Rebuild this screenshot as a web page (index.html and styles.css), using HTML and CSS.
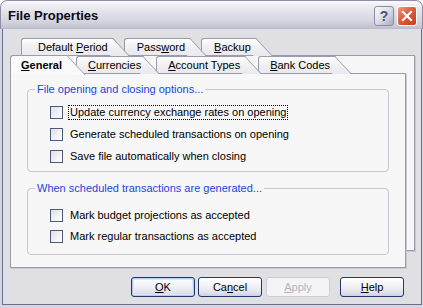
FILE: index.html
```html
<!DOCTYPE html>
<html lang="en">
<head>
    <meta charset="UTF-8">
    <meta name="viewport" content="width=device-width, initial-scale=1.0">
    <title>File Properties</title>
    <link rel="stylesheet" href="styles.css">
</head>
<body>
    <div class="window">
        <div class="titlebar">
            <span class="title">File Properties</span>
            <div class="caption-btns">
                <span class="cbtn help">?</span>
                <span class="cbtn close">
                    <svg width="12" height="12" viewBox="0 0 12 12">
                        <path d="M2 2 L10 10 M10 2 L2 10" stroke="#fff" stroke-width="2.2" stroke-linecap="square"/>
                    </svg>
                </span>
            </div>
        </div>

        <div class="client">
            <div class="tabstack">
                <div class="sheet back">
                    <div class="tabs">
                        <span class="tab first"><span>Default <u>P</u>eriod</span></span>
                        <span class="tab"><span>Pass<u>w</u>ord</span></span>
                        <span class="tab"><span><u>B</u>ackup</span></span>
                    </div>
                    <div class="page"></div>
                </div>

                <div class="sheet front">
                    <div class="tabs">
                        <span class="tab active"><span><u>G</u>eneral</span></span>
                        <span class="tab narrow"><span><u>C</u>urrencies</span></span>
                        <span class="tab"><span><u>A</u>ccount Types</span></span>
                        <span class="tab"><span><u>B</u>ank Codes</span></span>
                    </div>
                    <div class="page">
                        <fieldset class="group first-group">
                            <legend>File opening and closing options...</legend>
                            <div class="checks">
                                <label class="check"><span class="box"></span><span class="text focus">Update currency exchange rates on opening</span></label>
                                <label class="check"><span class="box"></span><span class="text">Generate scheduled transactions on opening</span></label>
                                <label class="check"><span class="box"></span><span class="text">Save file automatically when closing</span></label>
                            </div>
                        </fieldset>

                        <fieldset class="group second-group">
                            <legend>When scheduled transactions are generated...</legend>
                            <div class="checks">
                                <label class="check"><span class="box"></span><span class="text">Mark budget projections as accepted</span></label>
                                <label class="check"><span class="box"></span><span class="text">Mark regular transactions as accepted</span></label>
                            </div>
                        </fieldset>
                    </div>
                </div>
            </div>

            <div class="buttons">
                <button class="btn default"><u>O</u>K</button>
                <button class="btn">Ca<u>n</u>cel</button>
                <button class="btn" disabled><u>A</u>pply</button>
                <button class="btn help-btn"><u>H</u>elp</button>
            </div>
        </div>
    </div>
</body>
</html>
```

FILE: styles.css
```css
* {
    margin: 0;
    padding: 0;
    box-sizing: border-box;
}

body {
    font-family: "Liberation Sans", Arial, sans-serif;
    font-size: 11px;
    color: #000;
    background: #fff;
}

u {
    text-decoration: underline;
    text-underline-offset: 1px;
}

/* window frame */
.window {
    width: 423px;
    height: 308px;
    display: flex;
    flex-direction: column;
    background: #d6d6e2;
    border-radius: 7px 7px 0 0;
    padding: 0 1px 3px 2px;
    overflow: hidden;
}

.titlebar {
    height: 29px;
    margin: 0 -1px 0 -2px;
    display: flex;
    align-items: center;
    justify-content: space-between;
    padding: 0 5px 0 7px;
    border-radius: 7px 7px 0 0;
    border: 1px solid #8e8ea8;
    border-bottom: none;
    background: linear-gradient(#fcfcfd 0%, #eeeef3 15%, #e2e2ea 40%, #d8d8e2 65%, #c9c9d6 90%, #b9b9ca 100%);
}

.title {
    font-size: 13px;
    font-weight: bold;
    color: #0a0a14;
    margin-top: 1px;
}

.caption-btns {
    display: flex;
    gap: 3px;
    margin-top: 2px;
}

.cbtn {
    width: 20px;
    height: 20px;
    border-radius: 3px;
    display: flex;
    align-items: center;
    justify-content: center;
}

.cbtn.help {
    border: 1px solid #8a8aa4;
    background: linear-gradient(135deg, #fbfbfd, #d8d8e4 55%, #a9a9c0);
    color: #4e4e70;
    font-weight: bold;
    font-size: 14px;
}

.cbtn.close {
    border: 1px solid #fff;
    background: linear-gradient(135deg, #ef9a80, #de5d3f 45%, #c63d1f);
}

.client {
    flex: 1;
    background: #e0dfe3;
    border: 1px solid #6d6d8d;
    border-top: none;
    display: flex;
    flex-direction: column;
}

/* stacked property sheets */
.tabstack {
    display: grid;
    margin: 9px 6px 0 7px;
    height: 230px;
}

.sheet {
    grid-area: 1 / 1;
    display: flex;
    flex-direction: column;
}

.sheet.back {
    margin-left: 10px;
    margin-bottom: 17px;
}

.sheet.front {
    margin-top: 17px;
    margin-right: 9px;
}

.tabs {
    display: flex;
    align-items: flex-end;
    height: 17px;
    position: relative;
    z-index: 2;
}

.sheet.back .tabs {
    padding-left: 1px;
}

.sheet.front .tabs {
    height: 18px;
}

.tab {
    position: relative;
    z-index: 1;
    height: 17px;
    display: flex;
    align-items: center;
    padding: 0 4px 0 11px;
    margin-right: 14px;
    border: 1px solid #9b9bad;
    border-right: none;
    border-bottom: none;
    border-top-left-radius: 3px;
    background: linear-gradient(#ffffff, #f2f2f4 40%, #e9e9ee);
    white-space: nowrap;
}

.tab.narrow {
    padding-right: 1px;
}

/* slanted right edge of a tab */
.tab::after {
    content: "";
    position: absolute;
    z-index: -1;
    top: -1px;
    left: calc(100% - 18px);
    width: 18px;
    height: 17px;
    border-top: 1px solid #9b9bad;
    border-right: 1px solid #9b9bad;
    background: linear-gradient(#ffffff, #f2f2f4 40%, #e9e9ee);
    transform: skewX(43deg);
    transform-origin: top left;
}

.tabs .tab:nth-child(1) { z-index: 4; }
.tabs .tab:nth-child(2) { z-index: 3; }
.tabs .tab:nth-child(3) { z-index: 2; }

.sheet.back .tab {
    padding: 0 4px 0 12px;
    margin-right: 12px;
}

.sheet.back .tab.first {
    padding-left: 16px;
}

.tab.active {
    height: 19px;
    margin-bottom: -1px;
    margin-right: 10px;
    font-weight: bold;
    padding-left: 10px;
    background: #fafafb;
}

.tab.active::after {
    height: 19px;
    background: #fafafb;
}

.page {
    flex: 1;
    background: #f7f7f8;
    border: 1px solid #9b9bad;
    box-shadow: 1px 1px 0 #c9c9d6;
}

.sheet.front .page {
    padding: 9px 16px 0 16px;
    display: flex;
    flex-direction: column;
    gap: 10px;
}

/* group boxes */
.group {
    border: 1px solid #c8c8d2;
    border-radius: 4px;
    padding: 0 7px 8px 7px;
}

.group legend {
    color: #1a46d8;
    padding: 0 2px;
    line-height: 12px;
}

.checks {
    display: flex;
    flex-direction: column;
    gap: 9px;
    padding: 11px 0 0 15px;
}

.second-group .checks {
    gap: 8px;
    padding-top: 15px;
    padding-bottom: 3px;
}

.check {
    display: flex;
    align-items: center;
    height: 13px;
    gap: 5px;
}

.box {
    width: 13px;
    height: 13px;
    border: 1px solid #4a5a78;
    background: linear-gradient(135deg, #dedee4, #f4f4f6 60%, #fff);
}

.text {
    line-height: 13px;
    padding: 0 1px;
    border: 1px dotted transparent;
}

.text.focus {
    border-color: #000;
}

/* dialog buttons */
.buttons {
    display: flex;
    justify-content: flex-end;
    gap: 3px;
    margin: 9px 17px 0 0;
}

.btn {
    width: 64px;
    height: 20px;
    font-family: inherit;
    font-size: 11px;
    color: #000;
    border: 1px solid #1f3a68;
    border-radius: 3px;
    background: linear-gradient(#ffffff, #f4f4f7 40%, #e2e2ec 80%, #cfcfdf);
    cursor: pointer;
}

.btn.default {
    box-shadow: inset 0 0 0 1px #b8c8ec, inset 0 0 0 2px #dfe6f7;
}

.btn:disabled {
    color: #b4b3c2;
    border-color: #cdcdd6;
    background: #f4f4f6;
    margin-left: 1px;
}

.btn.help-btn {
    margin-left: 7px;
}
```
